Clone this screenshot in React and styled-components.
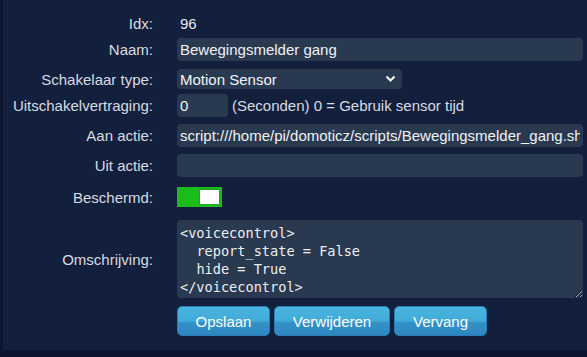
import React from 'react'
import styled, { createGlobalStyle } from 'styled-components'

const GlobalStyle = createGlobalStyle`
    html, body {
        margin: 0;
        padding: 0;
        background-color: #0b1530;
        font-family: "Liberation Sans", Arial, sans-serif;
        font-size: 15px;
    }
`

const Panel = styled.div`
    margin-left: 3px;
    height: 350px;
    padding-top: 12px;
    background-color: #12203d;
    box-sizing: border-box;
`

const Row = styled.div`
    display: grid;
    grid-template-columns: 150px 1fr;
    column-gap: 24px;
    align-items: center;
    height: ${p => p.$h}px;
    margin-top: ${p => p.$mt || 0}px;
    padding-right: 4px;
`

const Label = styled.div`
    text-align: right;
    color: #d8dbe0;
    white-space: nowrap;
`

const Value = styled.div`
    color: #e6e8ec;
    padding-left: 3px;
`

const Input = styled.input`
    box-sizing: border-box;
    width: ${p => p.$w ? `${p.$w}px` : '100%'};
    height: 23px;
    margin: 0;
    padding: 0 3px;
    border: none;
    border-radius: 4px;
    background-color: #293950;
    color: #f0f2f5;
    font-family: "Liberation Sans", Arial, sans-serif;
    font-size: 15px;
    outline: none;
`

const Inline = styled.div`
    display: flex;
    align-items: center;
    gap: 4px;
    color: #d8dbe0;
    white-space: nowrap;
`

const Select = styled.div`
    box-sizing: border-box;
    width: 225px;
    height: 20px;
    padding: 0 6px 0 3px;
    border-radius: 4px;
    background-color: #293950;
    color: #f4f5f7;
    display: flex;
    align-items: center;
    justify-content: space-between;
`

const Switch = styled.div`
    width: 45px;
    height: 20px;
    background-color: #1bbd1b;
    position: relative;
`

const Knob = styled.div`
    position: absolute;
    top: 3px;
    right: 3px;
    width: 19px;
    height: 14px;
    background-color: #fff;
    box-shadow: 0 0 2px rgba(0,0,0,0.35);
`

const TextArea = styled.textarea`
    box-sizing: border-box;
    width: 100%;
    height: 78px;
    margin: 0;
    padding: 4px 3px;
    border: none;
    border-radius: 4px;
    background-color: #293950;
    color: #eef0f3;
    font-family: "DejaVu Sans Mono", "Liberation Mono", monospace;
    font-size: 13.6px;
    line-height: 18px;
    outline: none;
    resize: both;
    overflow: hidden;
`

const Buttons = styled.div`
    display: flex;
    gap: 4px;
    height: 100%;
`

const Button = styled.button`
    box-sizing: border-box;
    width: ${p => p.$w}px;
    height: 30px;
    border: 1px solid #2a7fb6;
    border-radius: 5px;
    background: linear-gradient(#4ab4de 0%, #42abd9 50%, #3392c8 56%, #2d86c0 100%);
    color: #fff;
    font-family: "Liberation Sans", Arial, sans-serif;
    font-size: 15px;
    padding: 0;
    cursor: pointer;
`

const Chevron = () => (
    <svg width="11" height="8" viewBox="0 0 11 8">
        <path d="M1.5 1.5 L5.5 5.5 L9.5 1.5" fill="none" stroke="#f2f3f5" strokeWidth="2.2" />
    </svg>
)

const description = `<voicecontrol>
  report_state = False
  hide = True
</voicecontrol>`

const App = () => {
    return (
        <>
            <GlobalStyle />
            <Panel>
                <Row $h={23}>
                    <Label>Idx:</Label>
                    <Value>96</Value>
                </Row>
                <Row $h={23} $mt={3}>
                    <Label>Naam:</Label>
                    <Input defaultValue="Bewegingsmelder gang" />
                </Row>
                <Row $h={20} $mt={8}>
                    <Label>Schakelaar type:</Label>
                    <Select>
                        <span>Motion Sensor</span>
                        <Chevron />
                    </Select>
                </Row>
                <Row $h={23} $mt={5}>
                    <Label>Uitschakelvertraging:</Label>
                    <Inline>
                        <Input $w={51} defaultValue="0" />
                        <span>(Seconden) 0 = Gebruik sensor tijd</span>
                    </Inline>
                </Row>
                <Row $h={23} $mt={7}>
                    <Label>Aan actie:</Label>
                    <Input defaultValue="script:///home/pi/domoticz/scripts/Bewegingsmelder_gang.sh" />
                </Row>
                <Row $h={23} $mt={7}>
                    <Label>Uit actie:</Label>
                    <Input defaultValue="" />
                </Row>
                <Row $h={20} $mt={10}>
                    <Label>Beschermd:</Label>
                    <Switch><Knob /></Switch>
                </Row>
                <Row $h={78} $mt={13}>
                    <Label>Omschrijving:</Label>
                    <TextArea defaultValue={description} />
                </Row>
                <Row $h={30} $mt={8}>
                    <span />
                    <Buttons>
                        <Button $w={93}>Opslaan</Button>
                        <Button $w={116}>Verwijderen</Button>
                        <Button $w={93}>Vervang</Button>
                    </Buttons>
                </Row>
            </Panel>
        </>
    )
}

export default App
